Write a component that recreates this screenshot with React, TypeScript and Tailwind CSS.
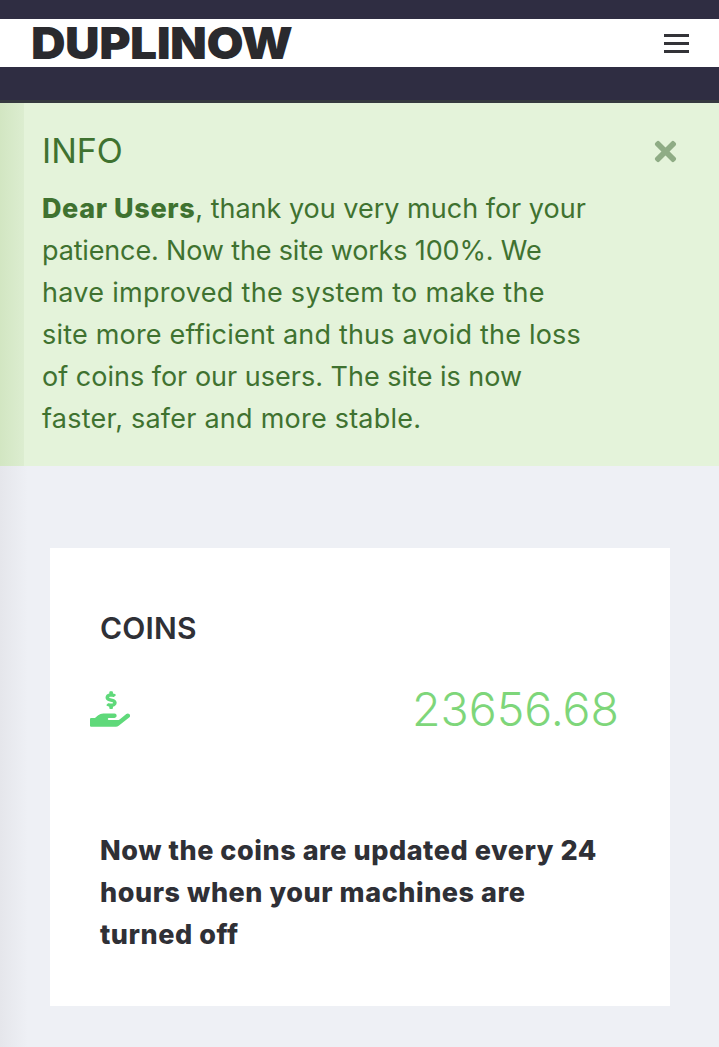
import React from "react";
import { FaHandHoldingUsd, FaTimes } from "react-icons/fa";

export default function App() {
  return (
    <div className="w-[719px] h-[1047px] overflow-hidden flex flex-col bg-[#eef0f5] font-['Inter',sans-serif]">
      <div className="h-[19px] shrink-0 bg-[#2f2d42]" />
      <header className="h-[48px] shrink-0 bg-white flex items-center justify-between pl-[31px] pr-[30px]">
        <span className="text-[44px] leading-none font-black tracking-[-0.5px] text-[#2a2a2e] origin-left scale-x-[1.09]">DUPLINOW</span>
        <div className="w-[25px] flex flex-col gap-[5px]">
          <div className="h-[3px] bg-[#333338]" />
          <div className="h-[3px] bg-[#333338]" />
          <div className="h-[3px] bg-[#333338]" />
        </div>
      </header>
      <div className="h-[36px] shrink-0 bg-[#2f2d42] border-b-[3px] border-[#35393f]" />
      <section className="h-[363px] shrink-0 bg-[linear-gradient(to_right,#d2e6c2,#dcedd0_24px,#e4f3da_24px)] pl-[42px] pr-[40px] pt-[26px] relative text-[#3f7230]">
        <h2 className="text-[34px] leading-[44px] font-normal">INFO</h2>
        <p className="mt-[15px] whitespace-nowrap text-[27px] leading-[42px]">
          <strong className="font-extrabold tracking-[0.6px]">Dear Users</strong>, thank you very much for your<br />
          <span className="tracking-[-0.15px]">patience. Now the site works 100%. We</span><br />
          <span className="tracking-[0.3px]">have improved the system to make the</span><br />
          <span className="tracking-[0.2px]">site more efficient and thus avoid the loss</span><br />
          of coins for our users. The site is now<br />
          <span className="tracking-[0.23px]">faster, safer and more stable.</span>
        </p>
        <FaTimes className="absolute right-[38px] top-[33px] w-[31px] h-[31px] text-[#8fac85]" />
      </section>
      <main className="flex-1 bg-[linear-gradient(to_right,#e5e6eb,#eef0f5_28px)] pl-[50px] pr-[49px] pt-[82px]">
        <div className="h-[458px] bg-white pl-[50px] pr-[51px] pt-[60px] text-[#2f3036]">
          <h3 className="text-[30px] leading-[40px] font-semibold tracking-[0.2px]">COINS</h3>
          <div className="mt-[31px] -ml-[10px] flex items-center justify-between">
            <FaHandHoldingUsd className="w-[40px] h-[40px] text-[#5fd97a]" />
            <span className="text-[46.5px] leading-[60px] font-light text-[#7ed67a]">23656.68</span>
          </div>
          <p className="mt-[91px] whitespace-nowrap text-[27px] leading-[42px] font-extrabold tracking-[0.55px]">
            Now the coins are updated every 24<br />
            hours when your machines are<br />
            turned off
          </p>
        </div>
      </main>
    </div>
  );
}
